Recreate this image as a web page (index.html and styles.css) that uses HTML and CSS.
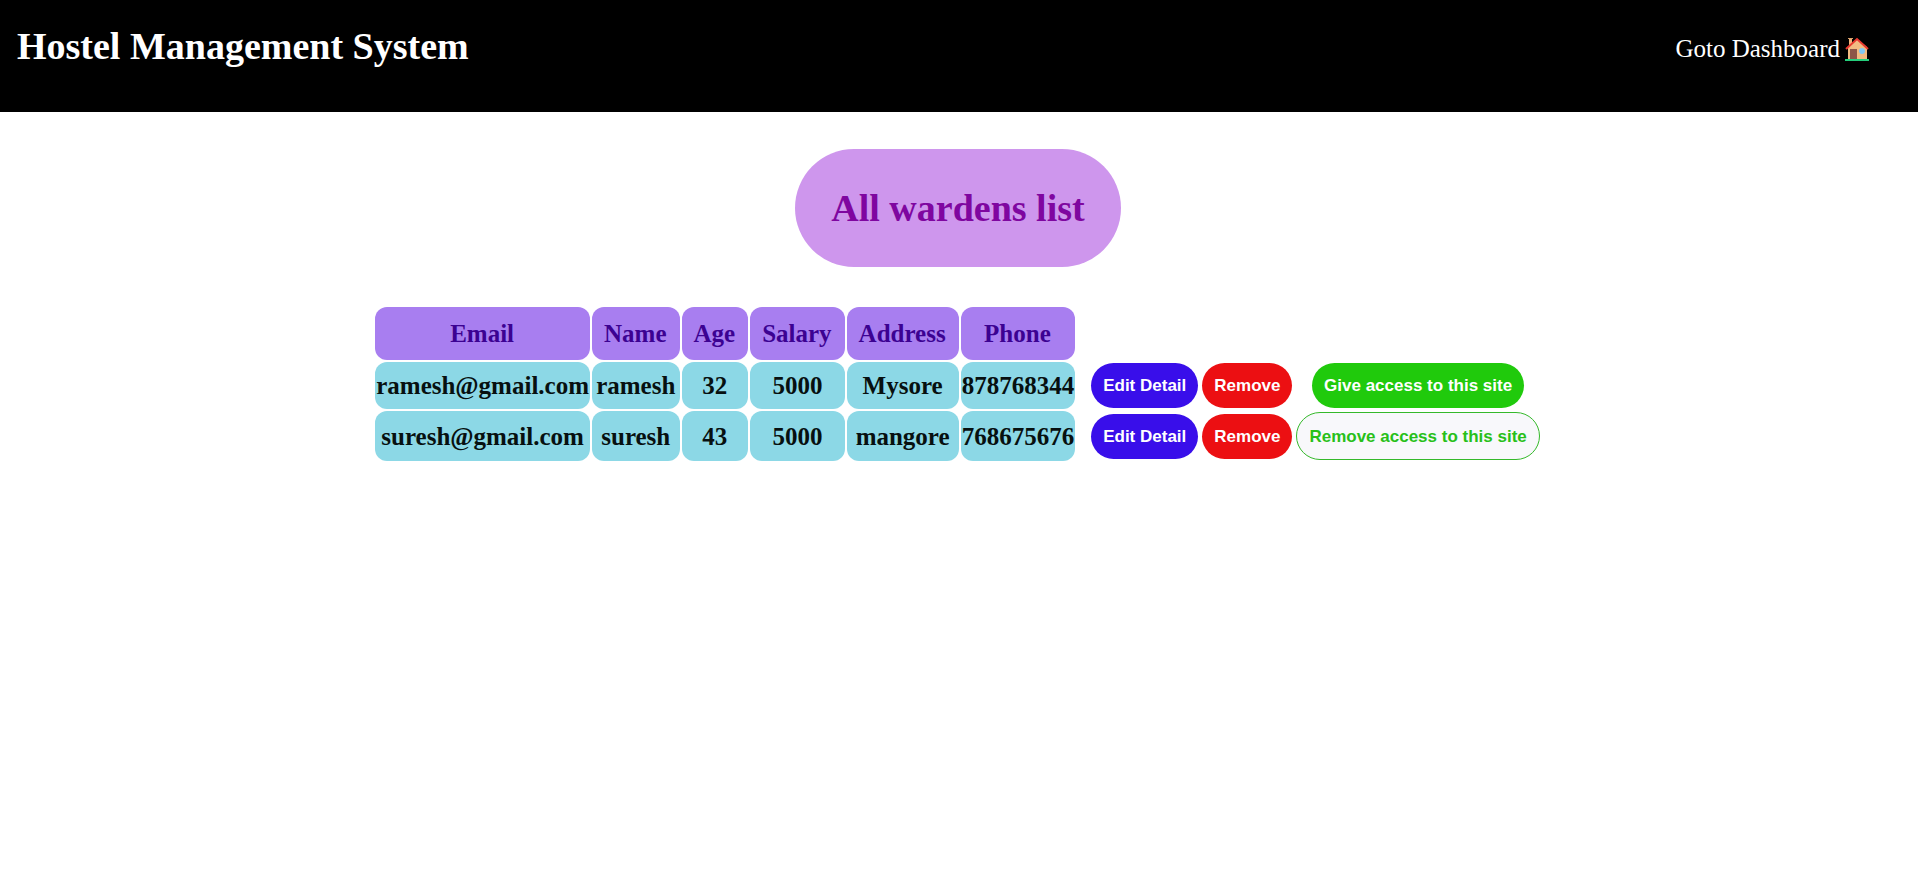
FILE: index.html
```html
<!DOCTYPE html>
<html lang="en">
<head>
<meta charset="utf-8">
<title>Hostel Management System</title>
<link rel="stylesheet" href="styles.css">
</head>
<body>
<header class="site-header">
  <h1 class="site-title">Hostel Management System</h1>
  <a class="dashboard-link" href="#">Goto Dashboard
    <svg class="house" viewBox="0 0 24 24" aria-hidden="true">
      <path fill="#efb57c" d="M4 1h3v8H4z"/>
      <path fill="#d9a06b" d="M3 1h5v1H3z"/>
      <path fill="#f2bb82" d="M12 2 3 10v12h19V10z"/>
      <path fill="none" stroke="#e8382f" stroke-width="2" d="M1 12 12 2l11 10"/>
      <path fill="#8d5548" d="M5 12h7v10H5z"/>
      <circle cx="17" cy="14" r="3" fill="#81c9f5"/>
      <path fill="#24ce7b" d="M0 22h24v2H0z"/>
    </svg>
  </a>
</header>
<main class="content">
  <h2 class="page-title">All wardens list</h2>
  <table class="wardens">
    <thead>
      <tr>
        <th class="head" scope="col">Email</th>
        <th class="head" scope="col">Name</th>
        <th class="head" scope="col">Age</th>
        <th class="head" scope="col">Salary</th>
        <th class="head" scope="col">Address</th>
        <th class="head" scope="col">Phone</th>
      </tr>
    </thead>
    <tbody>
      <tr>
        <td class="cell">ramesh@gmail.com</td>
        <td class="cell">ramesh</td>
        <td class="cell">32</td>
        <td class="cell">5000</td>
        <td class="cell">Mysore</td>
        <td class="cell">878768344</td>
        <td class="action action-first"><button class="btn btn-edit" type="button">Edit Detail</button></td>
        <td class="action"><button class="btn btn-remove" type="button">Remove</button></td>
        <td class="action"><button class="btn btn-give" type="button">Give access to this site</button></td>
      </tr>
      <tr>
        <td class="cell">suresh@gmail.com</td>
        <td class="cell">suresh</td>
        <td class="cell">43</td>
        <td class="cell">5000</td>
        <td class="cell">mangore</td>
        <td class="cell">768675676</td>
        <td class="action action-first"><button class="btn btn-edit" type="button">Edit Detail</button></td>
        <td class="action"><button class="btn btn-remove" type="button">Remove</button></td>
        <td class="action"><button class="btn btn-revoke" type="button">Remove access to this site</button></td>
      </tr>
    </tbody>
  </table>
</main>
</body>
</html>
```
FILE: styles.css
```css
body {
  margin: 0;
  background: #fff;
  color: #000;
  font-family: "Liberation Serif", "Times New Roman", serif;
}

.site-header {
  display: flex;
  justify-content: space-between;
  align-items: flex-start;
  padding: 24px 49px 38px 17px;
  background: #000;
  color: #fff;
}

.site-title {
  margin: 0;
  font-size: 38px;
  line-height: 44px;
}

.dashboard-link {
  display: flex;
  align-items: center;
  gap: 5px;
  color: #fff;
  font-size: 25px;
  line-height: 50px;
  text-decoration: none;
}

.house {
  width: 24px;
  height: 24px;
}

.content {
  display: flex;
  flex-direction: column;
  align-items: center;
  padding: 37px 2px 0 0;
}

.page-title {
  margin: 0;
  padding: 37px 36px;
  border-radius: 60px;
  background: #ce96ed;
  color: #7f06a0;
  font-size: 38px;
  line-height: 44px;
}

.wardens {
  margin-top: 38px;
  border-spacing: 2px;
  text-align: center;
  font-size: 25px;
  line-height: 29px;
}

.head {
  padding: 12px 13px 12px 12px;
  border-radius: 12px;
  background: #a87ef0;
  color: #3c0292;
}

.cell {
  padding: 0 1px;
  border-radius: 12px;
  background: #8cd8e6;
  color: #071010;
  font-weight: bold;
}

.action {
  padding: 1px;
}

.action-first {
  padding-left: 14px;
}

.btn {
  display: block;
  margin: 0 auto;
  padding: 13px 12px;
  border: 0;
  border-radius: 25px;
  color: #fff;
  font-family: "Liberation Sans", Arial, sans-serif;
  font-size: 17px;
  font-weight: bold;
  line-height: 19px;
  white-space: nowrap;
}

.btn-edit {
  background: #390eea;
}

.btn-remove {
  background: #ec0f12;
}

.btn-give {
  background: #20ca0c;
}

.btn-revoke {
  padding: 14px 12px 13px;
  border: 1px solid #35b92b;
  background: #f8f8fb;
  color: #28c019;
}
```
